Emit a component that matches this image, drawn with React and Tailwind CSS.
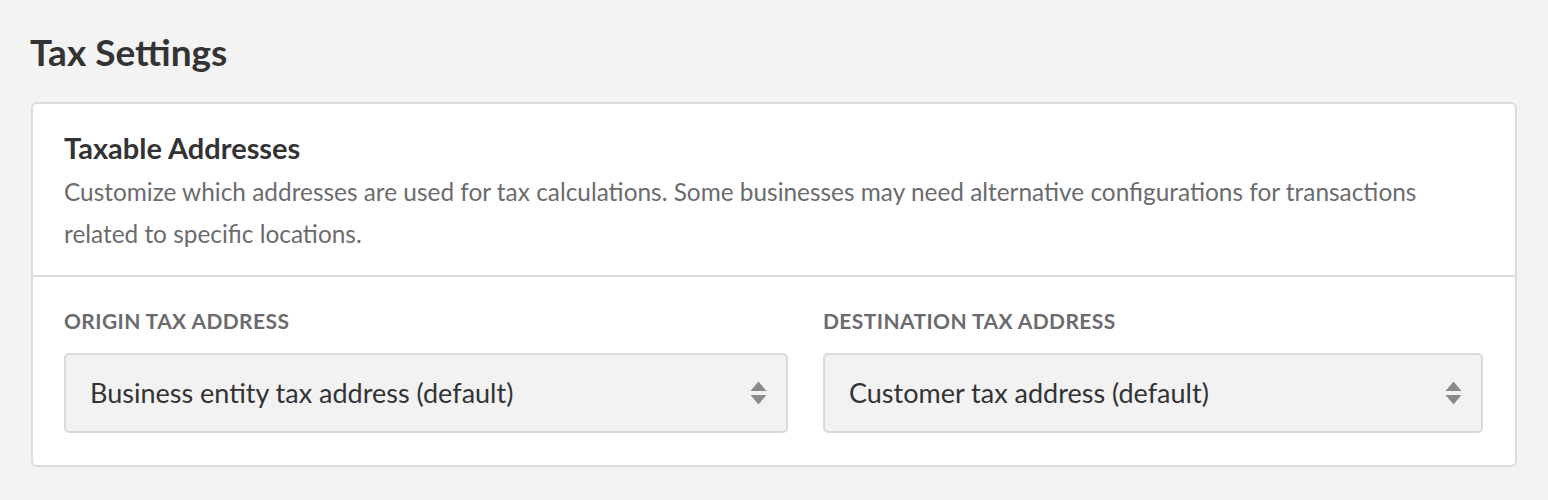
import React from 'react';

const SelectArrows = () => (
  <svg width="17" height="24" viewBox="0 0 17 24" className="shrink-0">
    <path d="M8.5 0.5 L16.5 10 L0.5 10 Z" fill="#8a8a8e" />
    <path d="M0.5 14 L16.5 14 L8.5 23.5 Z" fill="#8a8a8e" />
  </svg>
);

const AddressSelect = ({ label, value }) => (
  <div className="flex flex-col">
    <label className="text-[21px] leading-[28px] font-bold tracking-[0.4px] uppercase text-[#6b6b6e]">
      {label}
    </label>
    <div className="mt-[18px] h-[80px] flex items-center justify-between pl-[24px] pr-[19px] bg-[#f2f2f2] border-2 border-[#dadada] rounded-[5px]">
      <span className="text-[27px] text-[#333336]">{value}</span>
      <SelectArrows />
    </div>
  </div>
);

export default function App() {
  return (
    <div
      className="min-h-[500px] bg-[#f3f3f3] px-[31px] pt-[30px] pb-[34px]"
      style={{ fontFamily: '"Source Sans Pro", Lato, "Liberation Sans", sans-serif' }}
    >
      <h1 className="text-[37px] leading-[44px] font-bold text-[#333336] -ml-[1px]">Tax Settings</h1>

      <div className="mt-[28px] bg-white border-2 border-[#dcdcdc] rounded-[6px]">
        <div className="px-[31px] pt-[27px] pb-[20px] border-b-2 border-[#dcdcdc]">
          <h2 className="text-[29px] leading-[34px] font-bold text-[#333336]">Taxable Addresses</h2>
          <p className="mt-[6px] max-w-[1400px] text-[24.4px] leading-[42px] text-[#6b6b6e]">
            Customize which addresses are used for tax calculations. Some businesses may need alternative configurations for transactions related to specific locations.
          </p>
        </div>
        <div className="px-[31px] pt-[30px] pb-[32px] grid grid-cols-[724px_660px] gap-[35px]">
          <AddressSelect label="Origin Tax Address" value="Business entity tax address (default)" />
          <AddressSelect label="Destination Tax Address" value="Customer tax address (default)" />
        </div>
      </div>
    </div>
  );
}
